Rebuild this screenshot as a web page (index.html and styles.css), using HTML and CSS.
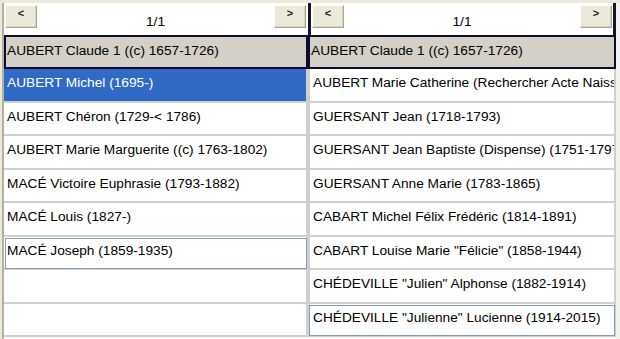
FILE: index.html
```html
<!DOCTYPE html>
<html lang="fr">

<head>
    <meta charset="UTF-8">
    <title>Liste des individus</title>
    <link rel="stylesheet" href="styles.css">
</head>

<body>
    <div class="lists">
        <div class="panel left">
            <div class="pager">
                <button class="navBtn">&lt;</button>
                <span class="pageLabel">1/1</span>
                <button class="navBtn">&gt;</button>
            </div>
            <div class="head">AUBERT Claude 1 ((c) 1657-1726)</div>
            <div class="row selected">AUBERT Michel (1695-)</div>
            <div class="row">AUBERT Chéron (1729-&lt; 1786)</div>
            <div class="row">AUBERT Marie Marguerite ((c) 1763-1802)</div>
            <div class="row">MACÉ Victoire Euphrasie (1793-1882)</div>
            <div class="row">MACÉ Louis (1827-)</div>
            <div class="row focus">MACÉ Joseph (1859-1935)</div>
            <div class="row"></div>
            <div class="row"></div>
        </div>
        <div class="panel right">
            <div class="pager">
                <button class="navBtn">&lt;</button>
                <span class="pageLabel">1/1</span>
                <button class="navBtn">&gt;</button>
            </div>
            <div class="head">AUBERT Claude 1 ((c) 1657-1726)</div>
            <div class="row">AUBERT Marie Catherine (Rechercher Acte Naissance) (1689-1760)</div>
            <div class="row">GUERSANT Jean (1718-1793)</div>
            <div class="row">GUERSANT Jean Baptiste (Dispense) (1751-1797)</div>
            <div class="row">GUERSANT Anne Marie (1783-1865)</div>
            <div class="row">CABART Michel Félix Frédéric (1814-1891)</div>
            <div class="row">CABART Louise Marie "Félicie" (1858-1944)</div>
            <div class="row">CHÉDEVILLE "Julien" Alphonse (1882-1914)</div>
            <div class="row focus">CHÉDEVILLE "Julienne" Lucienne (1914-2015)</div>
        </div>
        <div class="filler"></div>
    </div>
</body>

</html>
```

FILE: styles.css
```css
body {
    margin: 0;
    background: #ece9d8;
    font-family: "Liberation Sans", Arial, sans-serif;
    font-size: 13.7px;
    color: #000;
}

.lists {
    display: flex;
    height: 339px;
    padding: 3px 0 0 2px;
    box-sizing: border-box;
    overflow: hidden;
}

.panel {
    display: flex;
    flex-direction: column;
    background: #fff;
    flex-shrink: 0;
}

.panel.left {
    width: 304px;
    border-left: 2px solid #b3b09f;
}

.panel.right {
    width: 308px;
}

.filler {
    flex: 1;
    background: #f2f1ec;
}

/* top pager with the two arrow buttons */
.pager {
    height: 32px;
    box-sizing: border-box;
    display: flex;
    justify-content: space-between;
    align-items: flex-start;
    padding: 2px 2px 0 1px;
}

.right .pager {
    border-left: 3px solid #14142c;
    border-right: 3px solid #14142c;
    padding: 2px 1px 0 1px;
}

.navBtn {
    width: 32px;
    height: 23px;
    background: #ece9d8;
    border: 1px solid;
    border-color: #fdfdfb #a8a594 #a8a594 #fdfdfb;
    box-shadow: inset -1px -1px 0 #d6d3c2;
    font-family: "Liberation Sans", Arial, sans-serif;
    font-size: 11px;
    font-weight: bold;
    line-height: 1;
    padding: 2px 0 0 0;
    display: flex;
    justify-content: center;
    align-items: flex-start;
    color: #222;
}

.pageLabel {
    margin-top: 9px;
    line-height: 16px;
}

/* first row: the reference person */
.head {
    height: 34px;
    box-sizing: border-box;
    border: 2px solid #0c0c30;
    background: #d4d0c8;
    display: flex;
    align-items: center;
    padding: 0 0 3px 1px;
    white-space: nowrap;
    overflow: hidden;
}

.row {
    height: 33.5px;
    flex-shrink: 0;
    box-sizing: border-box;
    border-bottom: 2px solid #cfcfcf;
    display: flex;
    align-items: center;
    padding: 0 0 4px 3px;
    white-space: nowrap;
    overflow: hidden;
}

.left .row {
    border-right: 2px solid #cfcfcf;
}

.right .row {
    border-left: 2px solid #cfcfcf;
    border-right: 2px solid #cfcfcf;
    padding-left: 3px;
}

.row.selected {
    background: #316ac5;
    color: #fff;
}

.row.focus {
    outline: 1px solid #7f9db9;
    outline-offset: -2px;
}
```
